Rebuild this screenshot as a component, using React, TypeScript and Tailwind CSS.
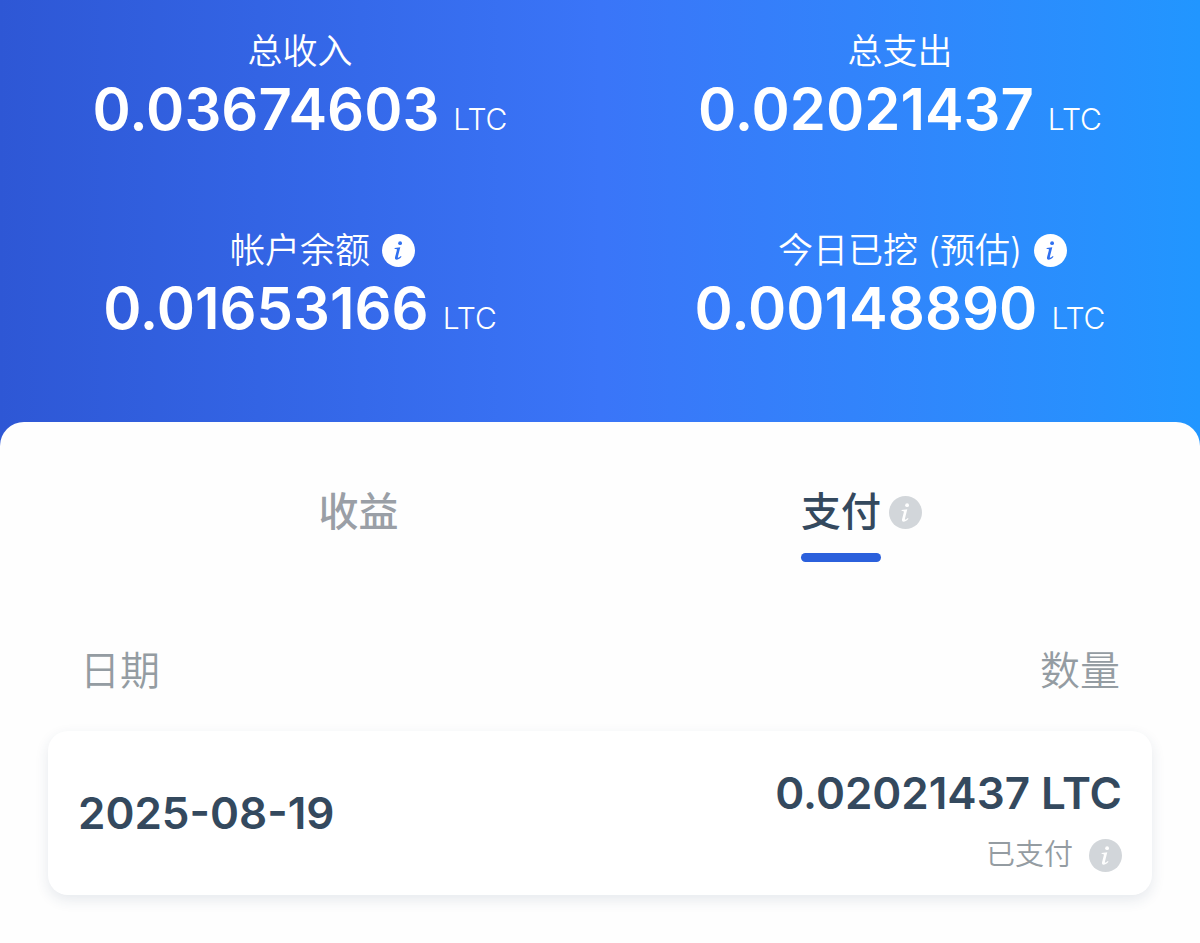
import { useState } from "react";

const STATS = [
  { label: "总收入", value: "0.03674603", info: false },
  { label: "总支出", value: "0.02021437", info: false },
  { label: "帐户余额", value: "0.01653166", info: true },
  { label: "今日已挖 (预估)", value: "0.00148890", info: true },
];

const PAYMENTS = [{ date: "2025-08-19", amount: "0.02021437 LTC", status: "已支付" }];

function InfoIcon({ className = "" }: { className?: string }) {
  return (
    <svg viewBox="0 0 33 33" className={`size-[33px] ${className}`} aria-hidden="true">
      <circle cx="16.5" cy="16.5" r="16.5" fill="currentColor" />
      <g className="fill-(--mark)">
        <circle cx="18.1" cy="9.2" r="1.9" />
        <path d="M12.7 14.1 18.3 13.2 15.9 22.7C15.6 24.1 16.4 24.1 18.9 22.1L19.5 22.8C17.5 25 16 25.8 14.6 25.8 13.2 25.8 12.7 24.7 13.1 23.1L14.8 16.4C15.1 15.2 14.6 15.1 12.6 15.1Z" />
      </g>
    </svg>
  );
}

export default function App() {
  const [tab, setTab] = useState("payout");

  return (
    <div className="min-h-screen bg-[#fefefe] font-['Inter','Noto_Sans_CJK_SC',sans-serif]">
      <header className="grid grid-cols-2 gap-y-[81px] bg-linear-to-r from-[#2e57d5] via-[#3a75f8] to-[#2196ff] pt-[31px] pb-[98px] text-white">
        {STATS.map((s) => (
          <div key={s.label} className="flex flex-col items-center">
            <div className="relative text-[35px] leading-10 font-[350] whitespace-nowrap">
              {s.label}
              {s.info && (
                <button aria-label="说明" className="absolute top-1 left-full ml-3 [--mark:#3070f0]">
                  <InfoIcon />
                </button>
              )}
            </div>
            <div className="mt-2 flex items-baseline gap-[14px] leading-[60px]">
              <span className="text-[58px] font-semibold">{s.value}</span>
              <span className="text-[30px] font-light">LTC</span>
            </div>
          </div>
        ))}
      </header>

      <main className="-mt-6 rounded-t-3xl bg-[#fefefe] pt-[66px] pb-12">
        <div className="grid grid-cols-2 pr-[87px] pl-[107px] text-[40px] leading-[48px] font-medium">
          <div className="flex justify-center">
            <button onClick={() => setTab("income")} className={`flex flex-col gap-[17px] ${tab === "income" ? "text-[#34495e]" : "text-[#9a9fa6]"}`}>
              收益
              {tab === "income" && <span className="h-[9px] w-full rounded-full bg-[#2b60dc]" />}
            </button>
          </div>
          <div className="flex items-start justify-center gap-2">
            <button onClick={() => setTab("payout")} className={`flex flex-col gap-[17px] ${tab === "payout" ? "text-[#34495e]" : "text-[#9a9fa6]"}`}>
              支付
              {tab === "payout" && <span className="h-[9px] w-full rounded-full bg-[#2b60dc]" />}
            </button>
            <button aria-label="支付说明" className="mt-2 text-[#d2d6da] [--mark:#fefefe]">
              <InfoIcon />
            </button>
          </div>
        </div>

        <table className="mt-[85px] block px-12">
          <thead className="block">
            <tr className="flex justify-between px-8 text-[40px] leading-[48px] text-[#949ca2]">
              <th className="font-[350]">日期</th>
              <th className="font-[350]">数量</th>
            </tr>
          </thead>
          <tbody className="mt-9 flex flex-col gap-6">
            {PAYMENTS.map((p) => (
              <tr key={p.date} className="flex items-center justify-between rounded-[20px] bg-white px-[30px] shadow-[0_5px_14px_rgba(40,60,100,0.11)]">
                <td className="text-[44px] leading-[52px] font-semibold text-[#34495e]">{p.date}</td>
                <td className="flex flex-col items-end gap-[18px] pt-9 pb-[22px]">
                  <span className="text-[44px] leading-[52px] font-semibold text-[#34495e]">{p.amount}</span>
                  <span className="flex items-center gap-4 text-[29px] leading-9 font-[350] text-[#949ca2]">
                    {p.status}
                    <button aria-label="状态说明" className="text-[#d2d6da] [--mark:#fefefe]">
                      <InfoIcon />
                    </button>
                  </span>
                </td>
              </tr>
            ))}
          </tbody>
        </table>
      </main>
    </div>
  );
}
